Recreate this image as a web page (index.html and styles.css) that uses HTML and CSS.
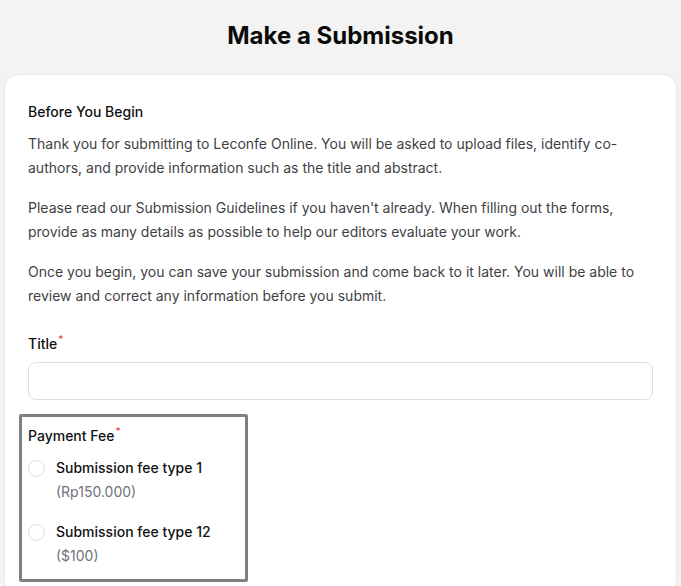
FILE: index.html
```html
<!DOCTYPE html>
<html>
<head>
<meta charset="utf-8">
<link rel="stylesheet" href="styles.css">
</head>
<body>
<h1 class="page-title">Make a Submission</h1>
<div class="card">
  <h2 class="section-title">Before You Begin</h2>
  <p class="text">Thank you for submitting to Leconfe Online. You will be asked to upload files, identify co-authors, and provide information such as the title and abstract.</p>
  <p class="text">Please read our Submission Guidelines if you haven't already. When filling out the forms, provide as many details as possible to help our editors evaluate your work.</p>
  <p class="text">Once you begin, you can save your submission and come back to it later. You will be able to review and correct any information before you submit.</p>

  <div class="field">
    <label class="label">Title<sup class="req">*</sup></label>
    <div class="input"></div>
  </div>

  <div class="fee-box">
    <div class="label">Payment Fee<sup class="req">*</sup></div>
    <div class="options">
      <div class="option">
        <span class="radio"></span>
        <div class="option-text">
          <div class="option-name">Submission fee type 1</div>
          <div class="option-price">(Rp150.000)</div>
        </div>
      </div>
      <div class="option">
        <span class="radio"></span>
        <div class="option-text">
          <div class="option-name">Submission fee type 12</div>
          <div class="option-price">($100)</div>
        </div>
      </div>
    </div>
  </div>
</div>
</body>
</html>
```
FILE: styles.css
```css
html, body {
  margin: 0;
  padding: 0;
  background: #f3f3f3;
  font-family: Inter, "Noto Sans", sans-serif;
  color: #18181b;
}
.page-title {
  margin: 0;
  padding-top: 21px;
  height: 53px;
  text-align: center;
  font-size: 24px;
  line-height: 30px;
  font-weight: 700;
  color: #0a0a0a;
}
.card {
  margin: 0 4px;
  background: #fff;
  border: 1px solid #e8e8e8;
  border-radius: 14px;
  padding: 25px 23px 0 23px;
  min-height: 520px;
  box-sizing: border-box;
}
.section-title {
  margin: 0;
  font-size: 14px;
  line-height: 24px;
  font-weight: 500;
  color: #111;
}
.text {
  margin: 8px 0 16px;
  font-size: 14px;
  line-height: 24px;
  color: #3f3f46;
}
.text + .text { margin-top: 0; }
.field {
  margin-top: 26px;
}
.label {
  display: block;
  font-size: 14px;
  line-height: 20px;
  font-weight: 500;
  color: #111;
}
.req {
  color: #ef4444;
  font-size: 10px;
  line-height: 0;
  vertical-align: 6px;
  margin-left: 1px;
}
.input {
  margin-top: 8px;
  height: 36px;
  border: 1px solid #dedede;
  border-radius: 8px;
  background: #fff;
}
.fee-box {
  margin: 14px 0 0 -9px;
  width: 217px;
  border: 3px solid #808080;
  border-radius: 2px;
  padding: 9px 0 11px 6px;
}
.options {
  margin-top: 10px;
  display: flex;
  flex-direction: column;
  gap: 16px;
}
.option {
  display: flex;
  gap: 11px;
}
.radio {
  flex: none;
  width: 15px;
  height: 15px;
  margin-top: 4px;
  border: 1px solid #dcdcdc;
  border-radius: 50%;
  background: #fff;
}
.option-name {
  font-size: 14px;
  line-height: 24px;
  font-weight: 500;
  color: #111;
}
.option-price {
  font-size: 14px;
  line-height: 24px;
  color: #71717a;
}
```
